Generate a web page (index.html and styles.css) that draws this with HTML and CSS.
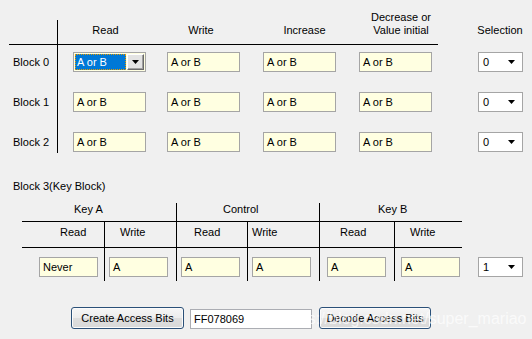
FILE: index.html
```html
<!DOCTYPE html>
<html lang="en">
<head>
<meta charset="UTF-8">
<title>Access Bits</title>
<link rel="stylesheet" href="styles.css">
</head>
<body>

<div class="panel">
    <!-- Data blocks 0..2 -->
    <div class="blocks">
        <div class="corner"></div>
        <div class="hd">Read</div>
        <div class="hd">Write</div>
        <div class="hd inc">Increase</div>
        <div class="hd dec">Decrease or<br>Value initial</div>
        <div class="hd sel">Selection</div>

        <div class="label">Block 0</div>
        <div class="cell first">
            <div class="combo-edit">
                <span class="picked">A or B</span>
                <span class="drop"><svg width="7" height="4" viewBox="0 0 7 4"><polygon points="0,0 7,0 3.5,4" fill="#000"/></svg></span>
            </div>
        </div>
        <div class="cell"><div class="field">A or B</div></div>
        <div class="cell"><div class="field">A or B</div></div>
        <div class="cell"><div class="field">A or B</div></div>
        <div class="cell pick"><div class="select"><span>0</span><svg width="7" height="4" viewBox="0 0 7 4"><polygon points="0,0 7,0 3.5,4" fill="#000"/></svg></div></div>

        <div class="label">Block 1</div>
        <div class="cell first"><div class="field">A or B</div></div>
        <div class="cell"><div class="field">A or B</div></div>
        <div class="cell"><div class="field">A or B</div></div>
        <div class="cell"><div class="field">A or B</div></div>
        <div class="cell pick"><div class="select"><span>0</span><svg width="7" height="4" viewBox="0 0 7 4"><polygon points="0,0 7,0 3.5,4" fill="#000"/></svg></div></div>

        <div class="label">Block 2</div>
        <div class="cell first"><div class="field">A or B</div></div>
        <div class="cell"><div class="field">A or B</div></div>
        <div class="cell"><div class="field">A or B</div></div>
        <div class="cell"><div class="field">A or B</div></div>
        <div class="cell pick"><div class="select"><span>0</span><svg width="7" height="4" viewBox="0 0 7 4"><polygon points="0,0 7,0 3.5,4" fill="#000"/></svg></div></div>
    </div>

    <!-- Sector trailer -->
    <div class="trailer-title">Block 3(Key Block)</div>
    <div class="trailer">
        <div class="grp key-a">Key A</div>
        <div class="grp ctrl">Control</div>
        <div class="grp key-b">Key B</div>
        <div class="grp-blank"></div>

        <div class="sub c1">Read</div>
        <div class="sub c2">Write</div>
        <div class="sub c3">Read</div>
        <div class="sub c4">Write</div>
        <div class="sub c5">Read</div>
        <div class="sub c6 last">Write</div>
        <div class="sub-blank"></div>

        <div class="td c1"><div class="field small">Never</div></div>
        <div class="td c2"><div class="field small">A</div></div>
        <div class="td c3"><div class="field small">A</div></div>
        <div class="td c4"><div class="field small">A</div></div>
        <div class="td c5"><div class="field small">A</div></div>
        <div class="td c6 last"><div class="field small">A</div></div>
        <div class="td pick"><div class="select"><span>1</span><svg width="7" height="4" viewBox="0 0 7 4"><polygon points="0,0 7,0 3.5,4" fill="#000"/></svg></div></div>
    </div>

    <div class="actions">
        <button class="btn create">Create Access Bits</button>
        <div class="bits">FF078069</div>
        <button class="btn decode">Decode Access Bits</button>
    </div>
</div>

<div class="watermark">https://blog.csdn.net/super_mariao</div>

</body>
</html>
```

FILE: styles.css
```css
body {
    margin: 0;
    background-color: #f0f0f0;
    font-family: "Liberation Sans", Arial, sans-serif;
    font-size: 11px;
    color: #000000;
    position: relative;
    height: 339px;
    overflow: hidden;
}
.panel {
    padding-top: 11px;
}

/* Blocks 0..2 grid */
.blocks {
    display: grid;
    grid-template-columns: 49px 95px 96px 96px 93px 94px;
    grid-template-rows: auto 40px 40px 28px;
    margin-left: 9px;
}
.corner {
    align-self: end;
    height: 25px;
    box-sizing: border-box;
    border-right: 1px solid #000;
    border-bottom: 1px solid #000;
}
.hd {
    align-self: end;
    text-align: center;
    line-height: 13px;
    padding-bottom: 7px;
    border-bottom: 1px solid #000;
}
.hd.inc { padding-left: 15px; }
.hd.dec { padding-left: 19px; }
.hd.sel {
    border-bottom: none;
    padding-bottom: 8px;
    padding-left: 30px;
}
.label {
    border-right: 1px solid #000;
    padding: 7px 0 0 4px;
    line-height: 20px;
}
.cell {
    padding: 7px 0 0 14px;
}
.cell.first { padding-left: 15px; }
.cell.pick { padding-left: 40px; }

.field {
    width: 73px;
    height: 20px;
    box-sizing: border-box;
    border: 1px solid #a5a5a5;
    background-color: #ffffe1;
    padding-left: 3px;
    line-height: 18px;
    white-space: nowrap;
}
.field.small { width: 59px; }

.combo-edit {
    display: flex;
    width: 73px;
    height: 20px;
    box-sizing: border-box;
    border: 1px solid #a5a5a5;
    background-color: #ffffe1;
    padding: 1px;
}
.combo-edit .picked {
    flex: 1;
    background-color: #0078d7;
    color: #ffffff;
    border: 1px dotted #e89a00;
    line-height: 14px;
    padding-left: 1px;
}
.combo-edit .drop {
    width: 17px;
    margin-left: 1px;
    box-sizing: border-box;
    border: 1px solid;
    border-color: #ffffff #696969 #696969 #ffffff;
    background-color: #e3e3e3;
    box-shadow: inset -1px -1px #a0a0a0;
    display: flex;
    align-items: center;
    justify-content: center;
}

.select {
    display: flex;
    align-items: center;
    justify-content: space-between;
    width: 45px;
    height: 20px;
    box-sizing: border-box;
    border: 1px solid #a5a5a5;
    background-color: #ffffff;
    padding: 0 7px 0 4px;
}

/* Sector trailer table */
.trailer-title {
    margin: 27px 0 0 13px;
    line-height: 13px;
}
.trailer {
    display: grid;
    grid-template-columns: 83px 72px 71px 72px 75px 67px 70px;
    margin: 10px 0 0 22px;
}
.grp {
    grid-column: span 2;
    line-height: 13px;
    padding-bottom: 5px;
    border-bottom: 1px solid #000;
    border-right: 1px solid #000;
}
.grp.key-a { padding-left: 52px; }
.grp.ctrl { padding-left: 46px; }
.grp.key-b { padding-left: 58px; border-right: none; }
.sub {
    line-height: 13px;
    padding: 4px 0 8px;
    border-bottom: 1px solid #000;
    border-right: 1px solid #000;
}
.td {
    height: 33px;
    box-sizing: border-box;
    padding-top: 9px;
    border-right: 1px solid #000;
}
.last { border-right: none; }
.sub.c1 { padding-left: 38px; }
.sub.c2 { padding-left: 15px; }
.sub.c3 { padding-left: 17px; }
.sub.c4 { padding-left: 4px; }
.sub.c5 { padding-left: 20px; }
.sub.c6 { padding-left: 15px; }
.td.c1 { padding-left: 17px; }
.td.c2, .td.c3, .td.c4 { padding-left: 4px; }
.td.c5 { padding-left: 7px; }
.td.c6 { padding-left: 6px; }
.td.pick { border-right: none; padding-left: 16px; }

/* Buttons */
.actions {
    display: flex;
    align-items: flex-end;
    margin: 26px 0 0 71px;
}
.btn {
    height: 22px;
    box-sizing: border-box;
    border: 1px solid #2b5078;
    border-radius: 3px;
    background: linear-gradient(#f6f6f6, #ececec 50%, #dedede 51%, #d9d9d9);
    box-shadow: inset 0 0 0 1px #fbfbfb;
    font-family: "Liberation Sans", Arial, sans-serif;
    font-size: 11px;
    color: #000;
    padding: 0;
}
.btn.create { width: 113px; }
.btn.decode { width: 112px; margin-left: 7px; }
.bits {
    width: 122px;
    height: 20px;
    box-sizing: border-box;
    border: 1px solid #abadb3;
    background-color: #ffffff;
    padding-left: 3px;
    line-height: 18px;
    margin-left: 6px;
}

.watermark {
    position: absolute;
    left: 281px;
    top: 310px;
    font-family: "Liberation Sans", Arial, sans-serif;
    font-size: 16px;
    color: rgba(255, 255, 255, 0.7);
    white-space: nowrap;
    pointer-events: none;
}
```
